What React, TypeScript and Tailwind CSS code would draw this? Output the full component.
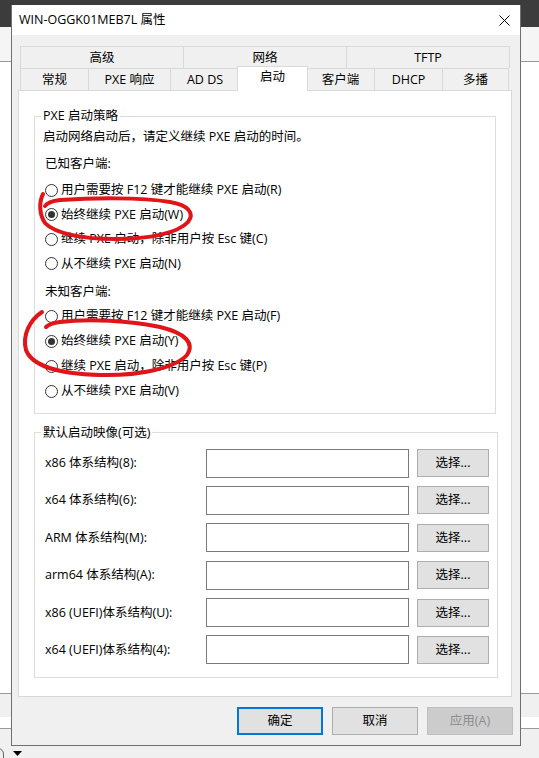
import type { ReactNode } from 'react'

const knownClients = [
  { label: '用户需要按 F12 键才能继续 PXE 启动(R)', on: false },
  { label: '始终继续 PXE 启动(W)', on: true },
  { label: '继续 PXE 启动，除非用户按 Esc 键(C)', on: false },
  { label: '从不继续 PXE 启动(N)', on: false },
]

const unknownClients = [
  { label: '用户需要按 F12 键才能继续 PXE 启动(F)', on: false },
  { label: '始终继续 PXE 启动(Y)', on: true },
  { label: '继续 PXE 启动，除非用户按 Esc 键(P)', on: false },
  { label: '从不继续 PXE 启动(V)', on: false },
]

const bootImages = [
  'x86 体系结构(8):',
  'x64 体系结构(6):',
  'ARM 体系结构(M):',
  'arm64 体系结构(A):',
  'x86 (UEFI)体系结构(U):',
  'x64 (UEFI)体系结构(4):',
]

const topTabs = ['高级', '网络', 'TFTP']

const bottomTabs = [
  { label: '常规', w: 'w-[68px]' },
  { label: 'PXE 响应', w: 'w-[82px]' },
  { label: 'AD DS', w: 'w-[69px]' },
  { label: '启动', w: 'w-[67px]', active: true },
  { label: '客户端', w: 'w-[68px]' },
  { label: 'DHCP', w: 'w-[68px]' },
  { label: '多播', w: 'w-[67px]' },
]

function Radio({ on }: { on: boolean }) {
  return (
    <span className="flex h-[13px] w-[13px] shrink-0 items-center justify-center rounded-full border border-[#333333] bg-white">
      {on && <span className="h-[7px] w-[7px] rounded-full bg-[#333333]" />}
    </span>
  )
}

function RadioRow({ label, on, tall }: { label: string; on: boolean; tall?: boolean }) {
  return (
    <div className={`flex items-center gap-[3px] pl-[2px] ${tall ? 'h-[25px]' : 'h-[24.5px]'}`}>
      <Radio on={on} />
      <span className="leading-[16px]">{label}</span>
    </div>
  )
}

function GroupBox({ title, className, children }: { title: string; className?: string; children: ReactNode }) {
  return (
    <fieldset className={`border border-[#dcdcdc] px-[8px] ${className ?? ''}`}>
      <legend className="-ml-[2px] px-[2px] leading-[16px]">{title}</legend>
      {children}
    </fieldset>
  )
}

function Button({ children, variant }: { children: ReactNode; variant?: 'default' | 'disabled' }) {
  const look =
    variant === 'default'
      ? 'border-2 border-[#0078d7] bg-[#e1e1e1] text-black'
      : variant === 'disabled'
        ? 'border border-[#bfbfbf] bg-[#cccccc] text-[#8d8d8d]'
        : 'border border-[#adadad] bg-[#e1e1e1] text-black'
  return (
    <div className={`flex h-[28px] w-[86px] items-center justify-center leading-[16px] ${look}`}>
      {children}
    </div>
  )
}

export default function App() {
  return (
    <div className="relative h-[758px] w-[539px] overflow-hidden bg-white font-['Open_Sans','Noto_Sans_CJK_SC',sans-serif] text-[12.5px] text-black">
      {/* Desktop behind the dialog */}
      <div className="flex h-full flex-col">
        <div className="h-[27px] bg-[#3c3c3c]" />
        <div className="h-[35px] border-b border-[#9a9a9a] bg-[#f5f5f5]" />
        <div className="h-[631px] bg-white" />
        <div className="h-[24px] border-t border-[#9a9a9a] bg-[#f0f0f0]" />
        <div className="h-[12px] border-b border-[#9a9a9a] bg-white" />
        <div className="flex flex-1 items-end bg-[#f0f0f0]">
          <span className="-ml-[8px] mb-[-6px] h-[16px] w-[12px] rounded-full border border-[#666]" />
          <svg width="9" height="5" viewBox="0 0 9 5" className="mb-[2px] ml-[9px]">
            <path d="M0 0 H9 L4.5 5 Z" fill="#000" />
          </svg>
        </div>
      </div>

      {/* Properties dialog */}
      <div className="absolute left-[11px] top-[5px] flex w-[510px] flex-col border-x border-b border-[#6f6f6f] bg-[#f0f0f0]">
        <div className="flex h-[30px] items-center justify-between bg-white pl-[7px] pr-[10px]">
          <span className="text-[12.5px] leading-[16px]">WIN-OGGK01MEB7L 属性</span>
          <svg width="11" height="11" viewBox="0 0 11 11" className="text-black">
            <path d="M0.5 0.5 L10.5 10.5 M10.5 0.5 L0.5 10.5" stroke="currentColor" strokeWidth="1" />
          </svg>
        </div>

        <div className="pt-[11px]">
          {/* Tab headers */}
          <div className="ml-[8px] flex w-[490px]">
            {topTabs.map((t, i) => (
              <div
                key={t}
                className={`flex h-[22px] flex-1 items-center justify-center border-l border-t border-[#d9d9d9] leading-[16px] ${
                  i === topTabs.length - 1 ? 'border-r' : ''
                }`}
              >
                {t}
              </div>
            ))}
          </div>
          <div className="ml-[8px] flex h-[22px] w-[490px] items-start">
            {bottomTabs.map((t, i) =>
              t.active ? (
                <div
                  key={t.label}
                  className="relative z-10 -mx-[2px] -mt-[2px] h-[25px] w-[71px] shrink-0 border-x border-t border-[#d9d9d9] bg-white pt-[2px] text-center leading-[16px]"
                >
                  {t.label}
                </div>
              ) : (
                <div
                  key={t.label}
                  className={`flex h-[22px] shrink-0 items-center justify-center border-l border-t border-[#d9d9d9] leading-[16px] ${t.w} ${
                    i === bottomTabs.length - 1 ? 'border-r' : ''
                  }`}
                >
                  {t.label}
                </div>
              ),
            )}
          </div>

          {/* Tab page */}
          <div className="ml-[6px] w-[494px] border border-[#d9d9d9] bg-white px-[15px] pb-[18px] pt-[17px]">
            <GroupBox title="PXE 启动策略" className="pb-[9px] pt-[5px]">
              <p className="leading-[16px]">启动网络启动后，请定义继续 PXE 启动的时间。</p>
              <p className="ml-[2px] mt-[11px] leading-[16px]">已知客户端:</p>
              <div className="mt-[6px]">
                {knownClients.map(c => (
                  <RadioRow key={c.label} label={c.label} on={c.on} />
                ))}
              </div>
              <p className="ml-[2px] mt-[8px] leading-[16px]">未知客户端:</p>
              <div className="mt-[3.5px]">
                {unknownClients.map(c => (
                  <RadioRow key={c.label} label={c.label} on={c.on} tall />
                ))}
              </div>
            </GroupBox>

            <GroupBox title="默认启动映像(可选)" className="mt-[11px] pb-[13px] pt-[8px]">
              <div className="flex flex-col gap-[8.4px]">
                {bootImages.map(label => (
                  <div key={label} className="flex h-[29px] items-center pl-[2px]">
                    <span className="w-[161px] shrink-0 leading-[16px]">{label}</span>
                    <div className="h-[29px] w-[203px] shrink-0 border border-[#7a7a7a] bg-white" />
                    <div className="ml-[8px] flex h-[28px] w-[72px] shrink-0 items-center justify-center border border-[#adadad] bg-[#e1e1e1] leading-[16px]">
                      选择...
                    </div>
                  </div>
                ))}
              </div>
            </GroupBox>
          </div>

          {/* Dialog buttons */}
          <div className="flex justify-end gap-[9px] pb-[10px] pr-[7px] pt-[10px]">
            <Button variant="default">确定</Button>
            <Button>取消</Button>
            <Button variant="disabled">应用(A)</Button>
          </div>
        </div>
      </div>

      {/* Red marker loops around the chosen options */}
      <svg
        className="pointer-events-none absolute inset-0"
        width="539"
        height="758"
        viewBox="0 0 539 758"
        fill="none"
      >
        <path
          d="M43 194 C39 202 39 214 45 223 C55 234 85 239 115 239 C150 239 178 233 188 222 C195 213 188 205 170 202 C140 197 90 198 60 200 C52 201 47 203 45 206"
          stroke="#e1141a"
          strokeWidth="4"
          strokeLinecap="round"
        />
        <path
          d="M42 312 C30 320 22 335 26 350 C32 366 60 374 100 375 C140 376 175 368 187 355 C195 343 185 333 160 327 C130 321 90 318 60 322 C52 323 48 325 46 327"
          stroke="#e1141a"
          strokeWidth="4"
          strokeLinecap="round"
        />
      </svg>
    </div>
  )
}
